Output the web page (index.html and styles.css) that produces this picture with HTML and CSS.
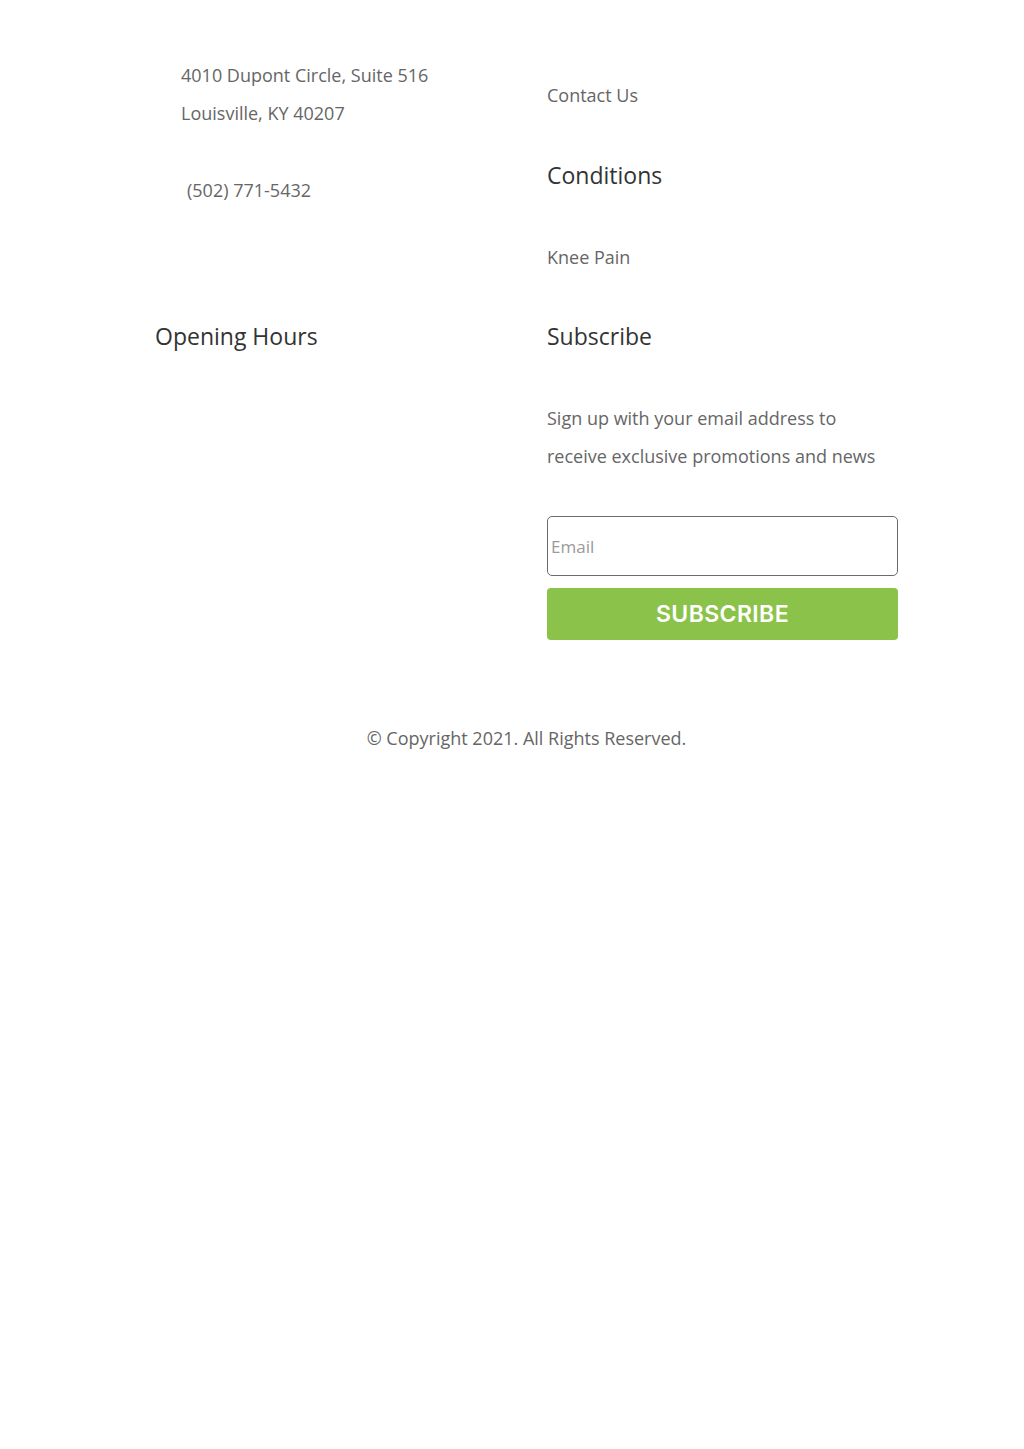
FILE: index.html
```html
<!DOCTYPE html>
<html lang="en">
<head>
<meta charset="utf-8">
<title>Footer</title>
<link rel="stylesheet" href="styles.css">
</head>
<body>
<footer class="footer">
  <div class="grid">
    <div class="col col-address">
      <p class="text addr">4010 Dupont Circle, Suite 516<br>Louisville, KY 40207</p>
      <p class="text phone">(502) 771-5432</p>
    </div>
    <div class="col col-links">
      <p class="text contact">Contact Us</p>
      <h3 class="heading cond">Conditions</h3>
      <p class="text knee">Knee Pain</p>
    </div>
    <div class="col">
      <h3 class="heading">Opening Hours</h3>
    </div>
    <div class="col">
      <h3 class="heading">Subscribe</h3>
      <p class="text signup">Sign up with your email address to<br>receive exclusive promotions and news</p>
      <form class="form">
        <input class="email" type="email" placeholder="Email">
        <button class="btn" type="button">SUBSCRIBE</button>
      </form>
    </div>
  </div>
  <p class="text copyright">© Copyright 2021. All Rights Reserved.</p>
</footer>
</body>
</html>
```
FILE: styles.css
```css
html, body {
  margin: 0;
  padding: 0;
  background: #fff;
}
body {
  font-family: "Open Sans", "Liberation Sans", sans-serif;
  color: #666;
}
.footer {
  width: 743px;
  margin-left: 155px;
  padding-top: 56px;
}
.grid {
  display: grid;
  grid-template-columns: 351px 351px;
  column-gap: 41px;
}
.text {
  margin: 0;
  font-size: 18px;
  line-height: 38px;
}
.heading {
  margin: 0;
  font-size: 23px;
  font-weight: 400;
  line-height: 38px;
  color: #333;
}
.col-address {
  padding-left: 26px;
}
.phone {
  margin-top: 39px;
  padding-left: 6px;
}
.contact {
  margin-top: 20px;
}
.cond {
  margin-top: 42px;
}
.knee {
  margin-top: 44px;
}
.col-links {
  padding-bottom: 41px;
}
.signup {
  margin-top: 44px;
}
.form {
  margin-top: 41px;
  display: flex;
  flex-direction: column;
  gap: 12px;
}
.email {
  box-sizing: border-box;
  width: 351px;
  height: 60px;
  margin: 0;
  padding: 0 3px;
  border: 1px solid #6b6b6b;
  border-radius: 5px;
  font-family: "Open Sans", "Liberation Sans", sans-serif;
  font-size: 17px;
  color: #666;
  background: #fff;
  outline: none;
}
.email::placeholder {
  color: #9a9a9a;
}
.btn {
  width: 351px;
  height: 52px;
  margin: 0;
  border: 0;
  border-radius: 4px;
  background: #8bc34a;
  color: #fff;
  font-family: "Inter", "Liberation Sans", sans-serif;
  font-weight: 600;
  font-size: 23px;
  letter-spacing: 0.4px;
  cursor: pointer;
}
.copyright {
  margin-top: 79px;
  text-align: center;
}
```
